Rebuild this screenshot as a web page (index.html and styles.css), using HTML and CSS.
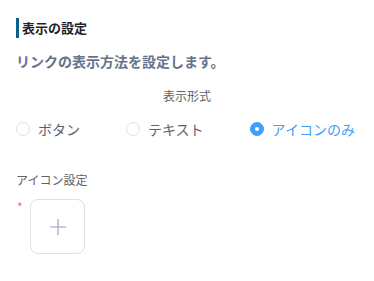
FILE: index.html
```html
<!DOCTYPE html>
<html lang="ja">
<head>
<meta charset="utf-8">
<link rel="stylesheet" href="styles.css">
</head>
<body>
<div class="page">
  <h2 class="title">表示の設定</h2>
  <p class="desc">リンクの表示方法を設定します。</p>
  <div class="field-label center">表示形式</div>
  <div class="radios">
    <label class="radio"><span class="dot"></span><span class="rl">ボタン</span></label>
    <label class="radio"><span class="dot"></span><span class="rl">テキスト</span></label>
    <label class="radio checked"><span class="dot"></span><span class="rl">アイコンのみ</span></label>
  </div>
  <div class="field-label icon-label">アイコン設定</div>
  <div class="upload-row">
    <span class="req">*</span>
    <div class="upload">
      <svg width="18" height="18" viewBox="0 0 18 18"><path d="M9 1v16M1 9h16" stroke="#b4bccc" stroke-width="1.6" fill="none"/></svg>
    </div>
  </div>
</div>
</body>
</html>
```

FILE: styles.css
```css
* { box-sizing: border-box; }
html, body { margin: 0; background: #fff; }
body { font-family: "Noto Sans CJK JP", "Noto Sans", sans-serif; }
.page { padding: 18px 16px; width: 374px; }
.title {
  margin: 0;
  font-size: 13px;
  font-weight: 700;
  line-height: 20px;
  color: #1f2329;
  border-left: 3px solid #0c6090;
  padding-left: 3px;
}
.desc {
  margin: 13px 0 0;
  font-size: 14px;
  font-weight: 700;
  line-height: 20px;
  color: #67738c;
}
.field-label {
  font-size: 12px;
  line-height: 16px;
  color: #606266;
}
.center { text-align: center; margin-top: 17px; }
.radios {
  display: flex;
  align-items: center;
  margin-top: 16px;
  height: 18px;
  white-space: nowrap;
}
.radio {
  display: flex;
  flex: none;
  align-items: center;
  margin-right: 46px;
  font-size: 14px;
  color: #606266;
}
.dot {
  flex: none;
  width: 14px;
  height: 14px;
  border: 1px solid #dcdfe6;
  border-radius: 50%;
  margin-right: 8px;
  background: #fff;
  position: relative;
}
.checked .dot { background: #409eff; border-color: #409eff; }
.checked .dot::after {
  content: "";
  position: absolute;
  width: 4px; height: 4px;
  border-radius: 50%;
  background: #fff;
  left: 4px; top: 4px;
}
.checked { color: #409eff; }
.icon-label { margin-top: 34px; }
.upload-row { display: flex; margin-top: 11px; }
.req { color: #f56c6c; font-size: 12px; line-height: 12px; width: 14px; padding-left: 1px; margin-top: 2px; }
.upload {
  width: 55px; height: 55px;
  border: 1px solid #dcdfe6;
  border-radius: 8px;
  display: flex; align-items: center; justify-content: center;
}
```
